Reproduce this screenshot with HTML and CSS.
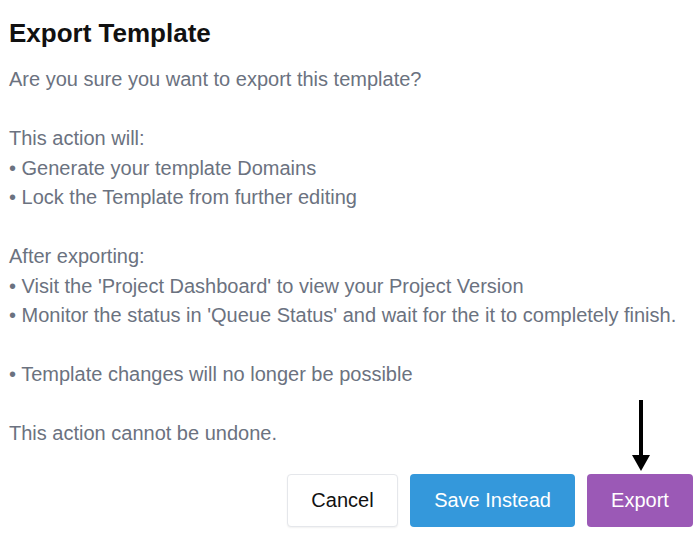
FILE: index.html
```html
<!DOCTYPE html>
<html>
<head>
<meta charset="utf-8">
<link rel="stylesheet" href="styles.css">
</head>
<body>
<div class="dialog">
  <h1 class="title">Export Template</h1>
  <div class="body">Are you sure you want to export this template?

This action will:
• Generate your template Domains
• Lock the Template from further editing

After exporting:
• Visit the 'Project Dashboard' to view your Project Version
• Monitor the status in 'Queue Status' and wait for the it to completely finish.

• Template changes will no longer be possible

This action cannot be undone.</div>
  <div class="actions">
    <button class="btn btn-cancel">Cancel</button>
    <button class="btn btn-save">Save Instead</button>
    <button class="btn btn-export">Export</button>
  </div>
  <div class="arrow">
    <div class="arrow-shaft"></div>
    <div class="arrow-head"></div>
  </div>
</div>
</body>
</html>
```
FILE: styles.css
```css
html, body {
  margin: 0;
  padding: 0;
  background: #ffffff;
}
.dialog {
  position: relative;
  width: 700px;
  height: 535px;
  box-sizing: border-box;
  padding: 18px 7px 0 9px;
  font-family: "Liberation Sans", Arial, sans-serif;
}
.title {
  margin: 0 0 17px 0;
  font-size: 26px;
  line-height: 30px;
  font-weight: bold;
  color: #111111;
}
.body {
  white-space: pre-line;
  font-size: 20px;
  line-height: 29.5px;
  color: #6b7280;
}
.actions {
  display: flex;
  justify-content: flex-end;
  gap: 12px;
  margin-top: 25px;
}
.btn {
  height: 53px;
  box-sizing: border-box;
  border-radius: 4px;
  font-family: "Liberation Sans", Arial, sans-serif;
  font-size: 20px;
  border: 1px solid transparent;
  padding: 0 20px;
}
.btn-cancel {
  width: 111px;
  background: #ffffff;
  color: #111111;
  border-color: #e5e7eb;
  box-shadow: 0 1px 2px rgba(0,0,0,0.06);
}
.btn-save {
  width: 165px;
  background: #3498db;
  color: #ffffff;
}
.btn-export {
  width: 106px;
  background: #9b59b6;
  color: #ffffff;
}
.arrow {
  position: absolute;
  left: 632px;
  top: 400px;
  width: 18px;
  display: flex;
  flex-direction: column;
  align-items: center;
}
.arrow-shaft {
  width: 4px;
  height: 55px;
  background: #000000;
}
.arrow-head {
  width: 0;
  height: 0;
  border-left: 9px solid transparent;
  border-right: 9px solid transparent;
  border-top: 16px solid #000000;
}
```
